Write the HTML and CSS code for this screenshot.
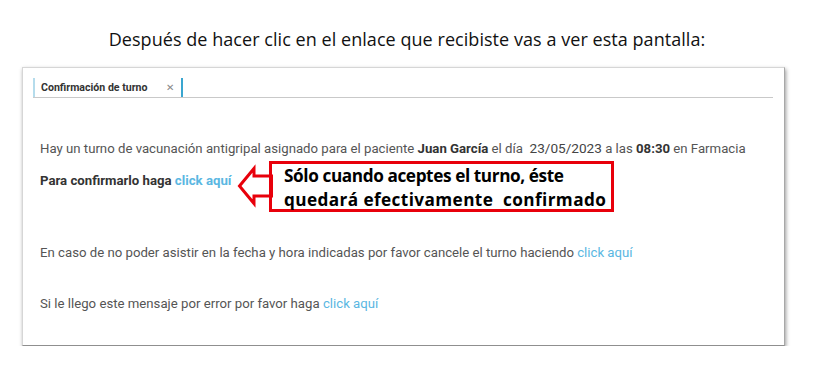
FILE: index.html
```html
<!DOCTYPE html>
<html>
<head>
<meta charset="utf-8">
<title>Confirmación de turno</title>
<link rel="stylesheet" href="styles.css">
</head>
<body>
<p class="intro">Después de hacer clic en el enlace que recibiste vas a ver esta pantalla:</p>

<div class="Card">
    <div class="TabBar">
        <div class="Tab">
            <span class="TabTitle">Confirmación de turno</span>
            <span class="TabClose">&#x2715;</span>
        </div>
    </div>

    <div class="Body">
        <p class="line first">Hay un turno de vacunación antigripal asignado para el paciente <b>Juan García</b> el día &nbsp;<span class="date">23/05/2023</span> a las <b>08:30</b> en Farmacia</p>
        <p class="line confirm"><b>Para confirmarlo haga <a href="#">click aquí</a></b></p>
        <p class="line cancel">En caso de no poder asistir en la fecha y hora indicadas por favor cancele el turno haciendo <a href="#">click aquí</a></p>
        <p class="line error">Si le llego este mensaje por error por favor haga <a href="#">click aquí</a></p>
    </div>

    <!-- nota en rojo sobre la captura -->
    <svg class="Arrow" width="36" height="44" viewBox="0 0 36 44">
        <polygon points="2.5,22 17,4.5 17,12 36,12 36,32 17,32 17,39.5" fill="#fff" stroke="#e8000b" stroke-width="3" stroke-linejoin="miter"/>
    </svg>
    <div class="Note">
        <span class="tight">Sólo cuando aceptes el turno, éste</span><br>
        <span class="wide">quedará efectivamente&nbsp; confirmado</span>
    </div>
</div>
</body>
</html>
```

FILE: styles.css
```css
body{
margin:0;
background:#fff;
font-family:"Roboto","Liberation Sans",sans-serif;
}
/*titulo de arriba*/
.intro{
margin:0;
padding-top:27px;
height:40px;
text-align:center;
font-family:"Open Sans","Liberation Sans",sans-serif;
font-size:18px;
letter-spacing:0.05px;
color:#111;
}
.Card
{
position:relative;
margin-left:22px;
width:761px;
height:277px;
background:#fff;
border:1px solid #d6d6d6;
border-bottom-color:#8f8f8f;
border-right-color:#a8a8a8;
box-shadow:1px 2px 4px rgba(0,0,0,0.4);
}
.TabBar
{
margin:8px 11px 0 10px;
height:21px;
border-bottom:1px solid #c9c9c9;
}
.Tab
{
display:inline-flex;
align-items:center;
height:19px;
margin-top:-2px;
border-left:2px solid #b5dcec;
border-right:2px solid #3aa6d0;
padding:0 7px 0 6px;
}
.TabTitle
{
font-size:10.6px;
font-weight:bold;
color:#333;
}
.TabClose
{
margin-left:18px;
font-size:10px;
color:#888;
}
.Body
{
padding:42px 0 0 17px;
}
.line
{
margin:0;
font-size:13.2px;
line-height:16px;
color:#555;
}
.line b
{
color:#333;
}
.line a
{
color:#5ab7e2;
text-decoration:none;
}
.date
{
color:#444;
font-size:13.6px;
}
.confirm
{
margin-top:16px;
}
.cancel
{
margin-top:56px;
}
.error
{
margin-top:35px;
}
.Arrow
{
position:absolute;
left:214px;
top:96px;
}
.Note
{
position:absolute;
left:246px;
top:93px;
width:327px;
height:45px;
padding:0 0 0 12px;
border:3px solid #e8000b;
font-family:"Open Sans","Liberation Sans",sans-serif;
font-weight:bold;
font-size:17.2px;
line-height:24px;
color:#000;
white-space:nowrap;
}
.tight
{
letter-spacing:-0.4px;
}
.wide
{
letter-spacing:0.4px;
}
```
